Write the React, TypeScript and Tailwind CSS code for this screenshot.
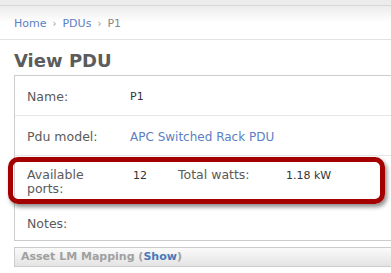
import React from "react";

export default function App() {
  const font = { fontFamily: '"DejaVu Sans", Verdana, sans-serif' };
  return (
    <div
      className="relative w-[391px] h-[273px] overflow-hidden bg-white"
      style={font}
    >
      <div className="h-[6px] bg-[#ececec] border-b border-[#d6d6d6]" />
      <div className="h-[34px] bg-gradient-to-b from-[#ececec] via-white to-white border-b border-[#e2e2e2] pl-[14px] pt-[10px]">
        <div className="flex items-center text-[11px] leading-[15px]">
          <span className="text-[#5b80c4]">Home</span>
          <span className="text-[#9a9a9a] mx-[6px] text-[10px]">›</span>
          <span className="text-[#5b80c4]">PDUs</span>
          <span className="text-[#9a9a9a] mx-[6px] text-[10px]">›</span>
          <span className="text-[#888]">P1</span>
        </div>
      </div>
      <h1 className="ml-[14px] mt-[10px] text-[18px] leading-[22px] font-bold text-[#5c5c5c]">
        View PDU
      </h1>
      <div className="ml-[14px] mt-[3px] w-[400px] border border-[#cccccc]">
        <div className="h-[40px] border-b border-[#e6e6e6] pt-[14px] pl-[12px] flex items-start leading-[14px]">
          <div className="w-[103px] text-[12.5px] text-[#5a5a5a]">Name:</div>
          <div className="text-[11px] text-[#333]">P1</div>
        </div>
        <div className="h-[40px] border-b border-[#e6e6e6] pt-[14px] pl-[12px] flex items-start leading-[14px]">
          <div className="w-[103px] text-[12.5px] text-[#5a5a5a]">Pdu model:</div>
          <div className="text-[12px] text-[#5b80c4]">APC Switched Rack PDU</div>
        </div>
        <div className="h-[47px] pt-[12px] pl-[12px] flex items-start leading-[14px]">
          <div className="w-[106px] text-[12.5px] text-[#5a5a5a]">
            Available
            <br />
            ports:
          </div>
          <div className="w-[45px] pt-[1px] text-[11px] text-[#333]">12</div>
          <div className="w-[108px] text-[12.5px] text-[#5a5a5a]">Total watts:</div>
          <div className="pt-[1px] text-[11px] text-[#333]">1.18 kW</div>
        </div>
        <div className="h-[37px] pt-[14px] pl-[12px] flex items-start leading-[14px]">
          <div className="w-[103px] text-[12.5px] text-[#5a5a5a]">Notes:</div>
        </div>
      </div>
      <div className="ml-[14px] mt-[6px] w-[400px] h-[20px] border border-[#cccccc] bg-gradient-to-b from-[#fafafa] to-[#e4e4e4] flex items-center pl-[6px]">
        <span className="text-[11px] leading-[14px] font-bold text-[#a0a0a0]">
          Asset LM Mapping (<span className="text-[#4a78b8]">Show</span>)
        </span>
      </div>
      <div className="absolute left-[8px] top-[157px] w-[377px] h-[47px] border-[5px] border-[#a40000] rounded-[10px] shadow-[2px_3px_4px_rgba(0,0,0,0.45)]" />
    </div>
  );
}
